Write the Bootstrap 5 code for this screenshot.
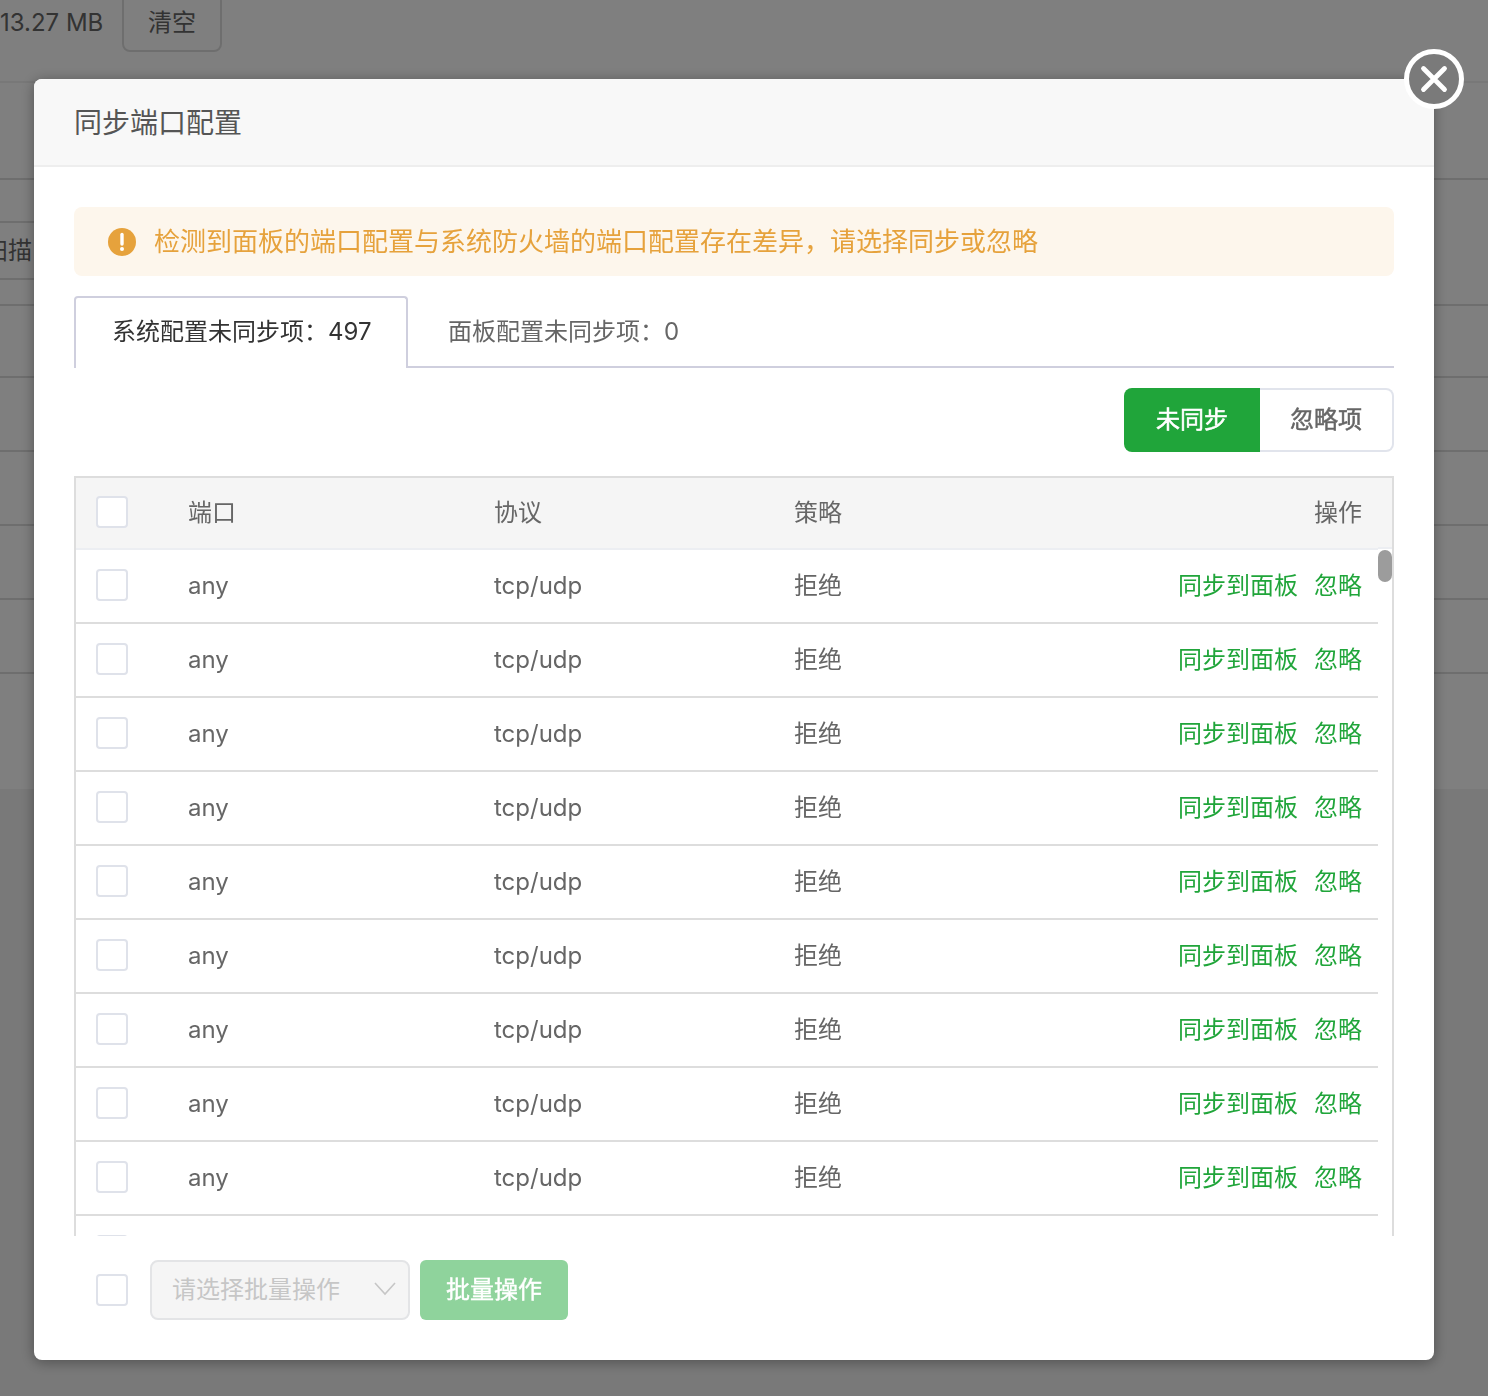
<!DOCTYPE html>
<html lang="zh-CN">
<head>
<meta charset="utf-8">
<title>同步端口配置</title>
<link href="https://cdn.jsdelivr.net/npm/bootstrap@5.3.0/dist/css/bootstrap.min.css" rel="stylesheet">
<style>
html,body{height:1396px;overflow:hidden}
body{font-family:Inter,"Noto Sans CJK SC",sans-serif;font-size:24px;color:#666;background:#f2f2f2;line-height:1.5}
.pg-top{height:790px;background:#fff}
.pg-head{height:84px;border-bottom:2px solid #f0f0f0;margin-top:-1px}
.pg-size{font-size:24px;line-height:48px;padding-right:20px;flex:none;width:122px;text-align:right;white-space:nowrap}
.pg-clear{width:100px;height:59px;margin-top:-6px;border:2px solid #ddd;border-radius:8px;background:#fff;color:#666;font-size:24px;padding:0;flex:none}
.pg-line{border-bottom:2px solid #ddd}
.pg-a{height:97px}.pg-b{height:126px}.pg-c{height:72px}.pg-d{height:74px}
.pg-scan{height:59px;margin-top:-59px;width:34px;padding-right:2px;border-top:2px solid #ddd;border-bottom:2px solid #ddd;overflow:hidden;white-space:nowrap;direction:rtl;line-height:55px;position:relative;top:-26px}
.dim{position:fixed;inset:0;background:rgba(0,0,0,.5)}
.dlg{position:fixed;left:34px;top:79px;width:1400px;height:1281px;background:#fff;border-radius:8px;box-shadow:0 2px 14px rgba(0,0,0,.35);display:flex;flex-direction:column}
.dlg-head{height:88px;background:#f8f8f8;border-bottom:2px solid #eee;padding:0 40px;font-size:28px;line-height:89px;color:#555;border-radius:8px 8px 0 0;flex:none}
.dlg-x{position:absolute;left:1370px;top:-30px;width:60px;height:60px;border:5px solid #fff;border-radius:50%;background:#7a7a7a;padding:0;display:flex;align-items:center;justify-content:center}
.dlg-body{padding:40px 40px 0;flex:1;min-height:0;display:flex;flex-direction:column}
.warn{height:69px;background:#fdf6ec;border-radius:8px;padding:0 34px;color:#e6a23c;font-size:26px;gap:18px;flex:none;line-height:69px}
.warn-ico{width:28px;height:28px;flex:none}
.tabbar{height:72px;margin-top:20px;border-bottom:2px solid #cfcfde;flex:none}
.tabitem{height:72px;line-height:71px;padding:0 40px;color:#666;font-size:24px}
.tabitem-on{color:#333;background:#fff;border:2px solid #cfcfde;border-bottom:0;border-radius:4px 4px 0 0;padding:0 36px;width:334px;line-height:68px;white-space:nowrap}
.seg{margin-top:20px;flex:none;height:64px}
.seg-on,.seg-off{height:64px;font-size:24px;font-weight:400;-webkit-text-stroke:.5px currentColor;text-align:center;padding:0}
.seg-on{width:136px;background:#20a53a;color:#fff;border-radius:8px 0 0 8px;border:0}
.seg-off{width:134px;background:#fff;color:#666;border:2px solid #e1e4ec;border-left:0;border-radius:0 8px 8px 0}
.grid-wrap{margin-top:24px;border:solid #ddd;border-width:2px 2px 0;height:760px;overflow:hidden;position:relative;flex:none}
.grid-t{width:1302px;table-layout:fixed;border-collapse:collapse;margin:0}
.grid-t td,.grid-t th{font-weight:400;padding:0;vertical-align:middle;color:#666;border-bottom:2px solid #ddd;height:74px}
.grid-t th{height:71px;background:#f5f5f5;border-bottom-color:#eceef2}
.c1{width:112px;padding-left:20px!important}.c2{width:306px}.c3{width:300px}.c4{width:300px}.c5{width:284px;padding-right:16px!important;text-align:right}
.head-fill{position:absolute;top:0;right:0;width:14px;height:71px;background:#f5f5f5;border-bottom:2px solid #eceef2}
.tick{display:block;width:32px;height:32px;border:2px solid #dfe2ea;border-radius:4px;background:#fff}
.grid-t .tick{position:relative;top:-1px}
.act{color:#20a53a;text-decoration:none}
.act+.act{margin-left:16px}
.thumb{position:absolute;top:72px;right:0;width:14px;height:32px;border-radius:7px;background:#9c9c9c}
.foot{height:124px;padding:24px 0 0 22px;gap:22px;flex:none}
.foot .tick{margin-top:14px}
.pick{width:260px;height:60px;background:#f5f5f5;border:2px solid #e3e4e6;border-radius:8px;color:#c6c6c6;padding:0 20px;position:relative;line-height:56px}
.pick svg{position:absolute;right:11px;top:17px}
.bulk{width:148px;height:60px;background:#8fd39c;border:0;border-radius:6px;color:#fff;font-size:24px;font-weight:400;-webkit-text-stroke:.4px currentColor;padding:0;margin-left:-12px}
</style>
</head>
<body>
<div class="pg-top">
  <div class="pg-head d-flex justify-content-start align-items-start">
    <span class="pg-size">13.27 MB</span>
    <button class="pg-clear" type="button">清空</button>
  </div>
  <div class="pg-line pg-a"></div>
  <div class="pg-line pg-b"></div>
  <div class="pg-scan">扫描</div>
  <div class="pg-line pg-c"></div>
  <div class="pg-line pg-d"></div>
  <div class="pg-line pg-d"></div>
  <div class="pg-line pg-d"></div>
  <div class="pg-line pg-d"></div>
</div>
<div class="dim"></div>
<div class="dlg">
  <div class="dlg-head">同步端口配置</div>
  <button class="dlg-x" type="button" aria-label="关闭">
    <svg width="30" height="30" viewBox="0 0 30 30"><path d="M4.5 4.5L25.5 25.5M25.5 4.5L4.5 25.5" stroke="#fff" stroke-width="4.8" stroke-linecap="round"/></svg>
  </button>
  <div class="dlg-body">
    <div class="warn d-flex align-items-center">
      <svg class="warn-ico" viewBox="0 0 28 28"><circle cx="14" cy="14" r="14" fill="#e6a23c"/><path d="M14 6.5V16" stroke="#fff" stroke-width="3.4" stroke-linecap="round"/><circle cx="14" cy="21" r="2" fill="#fff"/></svg>
      <span>检测到面板的端口配置与系统防火墙的端口配置存在差异，请选择同步或忽略</span>
    </div>
    <div class="tabbar d-flex">
      <div class="tabitem tabitem-on">系统配置未同步项：497</div>
      <div class="tabitem">面板配置未同步项：0</div>
    </div>
    <div class="seg d-flex justify-content-end">
      <button class="seg-on" type="button">未同步</button>
      <button class="seg-off" type="button">忽略项</button>
    </div>
    <div class="grid-wrap">
      <div class="head-fill"></div>
      <table class="grid-t">
        <thead><tr><th class="c1"><span class="tick"></span></th><th class="c2">端口</th><th class="c3">协议</th><th class="c4">策略</th><th class="c5">操作</th></tr></thead>
        <tbody>
          <tr><td class="c1"><span class="tick"></span></td><td>any</td><td>tcp/udp</td><td>拒绝</td><td class="c5"><a class="act" href="#">同步到面板</a><a class="act" href="#">忽略</a></td></tr>
          <tr><td class="c1"><span class="tick"></span></td><td>any</td><td>tcp/udp</td><td>拒绝</td><td class="c5"><a class="act" href="#">同步到面板</a><a class="act" href="#">忽略</a></td></tr>
          <tr><td class="c1"><span class="tick"></span></td><td>any</td><td>tcp/udp</td><td>拒绝</td><td class="c5"><a class="act" href="#">同步到面板</a><a class="act" href="#">忽略</a></td></tr>
          <tr><td class="c1"><span class="tick"></span></td><td>any</td><td>tcp/udp</td><td>拒绝</td><td class="c5"><a class="act" href="#">同步到面板</a><a class="act" href="#">忽略</a></td></tr>
          <tr><td class="c1"><span class="tick"></span></td><td>any</td><td>tcp/udp</td><td>拒绝</td><td class="c5"><a class="act" href="#">同步到面板</a><a class="act" href="#">忽略</a></td></tr>
          <tr><td class="c1"><span class="tick"></span></td><td>any</td><td>tcp/udp</td><td>拒绝</td><td class="c5"><a class="act" href="#">同步到面板</a><a class="act" href="#">忽略</a></td></tr>
          <tr><td class="c1"><span class="tick"></span></td><td>any</td><td>tcp/udp</td><td>拒绝</td><td class="c5"><a class="act" href="#">同步到面板</a><a class="act" href="#">忽略</a></td></tr>
          <tr><td class="c1"><span class="tick"></span></td><td>any</td><td>tcp/udp</td><td>拒绝</td><td class="c5"><a class="act" href="#">同步到面板</a><a class="act" href="#">忽略</a></td></tr>
          <tr><td class="c1"><span class="tick"></span></td><td>any</td><td>tcp/udp</td><td>拒绝</td><td class="c5"><a class="act" href="#">同步到面板</a><a class="act" href="#">忽略</a></td></tr>
          <tr><td class="c1"><span class="tick"></span></td><td></td><td></td><td></td><td class="c5"></td></tr>
        </tbody>
      </table>
      <div class="thumb"></div>
    </div>
    <div class="foot d-flex align-items-start">
      <span class="tick"></span>
      <div class="pick">请选择批量操作
        <svg width="24" height="20" viewBox="0 0 24 20"><path d="M2 4L12 15L22 4" fill="none" stroke="#c6c6c6" stroke-width="1.6"/></svg>
      </div>
      <button class="bulk" type="button">批量操作</button>
    </div>
  </div>
</div>
<script src="https://cdn.jsdelivr.net/npm/bootstrap@5.3.0/dist/js/bootstrap.bundle.min.js"></script>
</body>
</html>
